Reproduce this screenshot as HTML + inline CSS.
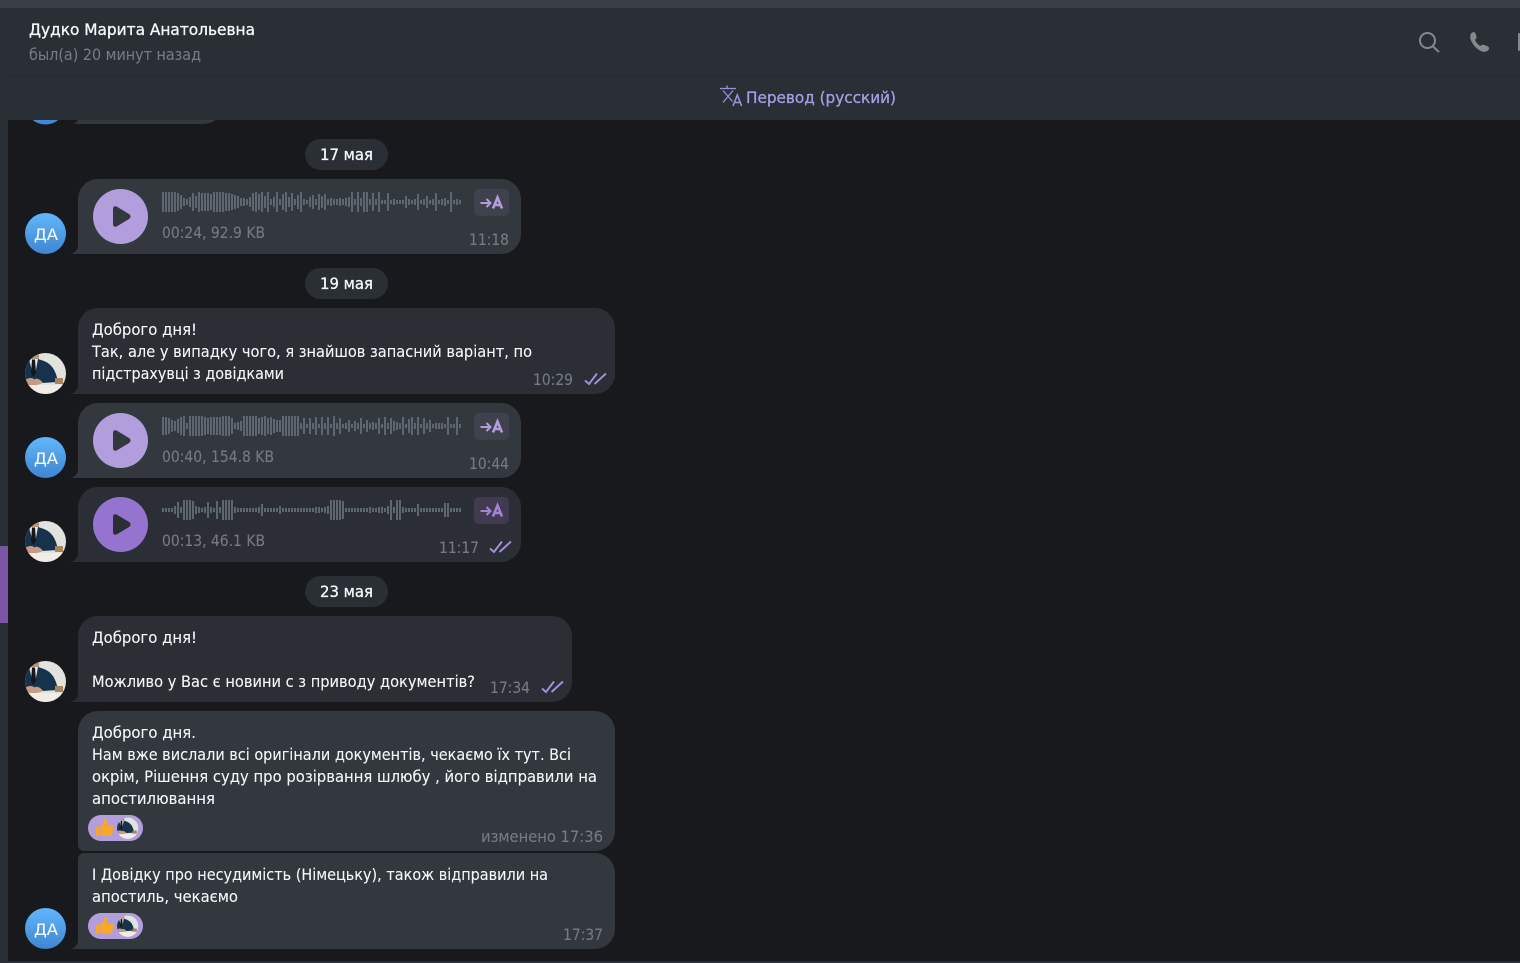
<!DOCTYPE html>
<html><head><meta charset="utf-8"><style>
html,body{margin:0;padding:0;width:1520px;height:963px;overflow:hidden;background:#17191c}
svg{display:block}
text{font-family:"DejaVu Sans","Liberation Sans",sans-serif;font-size:16px;fill:#f5f6f7;stroke:#f5f6f7;stroke-width:.12}
text.t{fill:#757b81;stroke:#757b81;stroke-width:.1}
text.m{stroke:#f5f6f7;stroke-width:.35}
.w{fill:none;stroke:#5c6772;stroke-width:2}
.c{fill:none;stroke:#a590e0;stroke-width:1.9}
.b{fill:#33383f}.o{fill:#2b2f35}
</style></head><body>
<svg width="1520" height="963" viewBox="0 0 1520 963" xmlns="http://www.w3.org/2000/svg">
<defs>
<linearGradient id="g" x1="0" y1="0" x2="0" y2="1"><stop offset="0" stop-color="#62b6fd"/><stop offset="1" stop-color="#3f86cf"/></linearGradient>
<clipPath id="cp"><circle cx="20.5" cy="20.5" r="20.5"/></clipPath>
<g id="ph"><g clip-path="url(#cp)">
<rect width="41" height="41" fill="#e2e2de"/>
<rect x="4" y="-2" width="10" height="9" fill="#b8937f"/>
<path d="M0 9L4 6 13 6 19 8C27 11 31 18 33 29L0 31Z" fill="#16324c"/>
<path d="M4 6H13L10 22H8Z" fill="#e9e9e9"/>
<path d="M7 6.500H10L11 20 8.500 24 6 20Z" fill="#14161a"/>
<path d="M0 27C4 24 8 25 9.500 26.500 12 24.500 16 27 18 30 11 33 4 33 0 31Z" fill="#c79a85"/>
<path d="M0 32H41V41H0Z" fill="#f1ece5"/>
<path d="M30 25h8v6h-8z" fill="#a8865c"/>
<path d="M2 29H0V35H4Z" fill="#3a3f48"/>
</g></g>
<g id="th"><path d="M1 8.500h3.500v9H1zM5.500 8.500L9 4.500 9.500 0.500C12 0 12.500 3 11.500 7.500H17C18.800 7.500 18.800 10 17.500 10.300 18.700 11 18.500 13 17.200 13.200 18 14.200 17.500 15.500 16.300 15.700 16.800 17 16 18 15 18H8C6.500 18 5.500 17.300 5.500 16.500Z" fill="#f8a824"/></g>
<g id="tr"><path d="M4.500 6H14" fill="none" stroke="currentColor" stroke-width="2"/><path d="M10.500 2L14.500 6 10.500 10" fill="none" stroke="currentColor" stroke-width="2"/><path d="M17 11.500L21.500 .5 26 11.500M18.500 8H24.500" fill="none" stroke="currentColor" stroke-width="2.600"/></g>
<path id="ck" d="M0 8.500L4 12 12 1.500M9.500 12L21 1.500" class="c"/>
</defs>

<rect width="1520" height="963" fill="#17191c"/>
<rect x="0" y="0" width="8" height="963" fill="#2a2e35"/>
<rect x="0" y="546" width="8" height="77" fill="#7b56a5"/>
<rect x="0" y="961" width="1520" height="2" fill="#2a2e35"/>

<!-- partial top -->
<circle cx="45.500" cy="104" r="20.500" fill="url(#g)"/>
<path d="M72 124c4-1 6-2 6-6v-10H220v0q0 16-18 16z" class="b"/>

<!-- header -->
<rect x="8" y="8" width="1512" height="112" fill="#2a2e35"/>
<rect x="0" y="0" width="1520" height="8" fill="#393f47"/>
<rect x="8" y="75" width="1512" height="1" fill="#272b30"/>
<text x="29" y="35" textLength="226" lengthAdjust="spacingAndGlyphs" class="m">Дудко Марита Анатольевна</text>
<text x="29" y="60" textLength="172" lengthAdjust="spacingAndGlyphs" class="t">был(а) 20 минут назад</text>
<g fill="none" stroke="#85898d" stroke-width="2"><circle cx="1427.500" cy="40.500" r="7.500"/><path d="M1433 46.500L1439 52"/></g>
<path d="M1471.500 33c2-1.500 3.500-1 4.300 1l.7 2.500c.3 1.500-.5 2.400-1.500 3.200.8 2.500 3 5 5.500 6.200 1-.9 2-1.300 3.300-1l3 1c2 .7 3 2.500 1.800 4-1.500 1.600-4 2.500-6.500 1.600-5-1.700-10-7-11.600-12.500-.6-2.400-.1-4.700.9-6z" fill="#85898d"/>
<rect x="1518" y="33" width="2" height="18" rx="1" fill="#85898d"/>
<g fill="none" stroke="#9793d8" stroke-width="1.500"><path d="M720 88.500H736M727 85.500v3M723 90.500l9.500 11M733 90.500l-10 12" stroke-width="1.300"/><path d="M733 106l4.300-11 4.300 11M734.500 102.500h5.500" stroke-width="1.600"/></g>
<text x="746" y="103" textLength="150" lengthAdjust="spacingAndGlyphs" style="fill:#a29fe6;stroke:#a29fe6;stroke-width:.3">Перевод (русский)</text>

<!-- dates -->
<rect x="305" y="139" width="83" height="31" rx="15.500" fill="#2a2e35"/>
<text x="320" y="160" textLength="53" lengthAdjust="spacingAndGlyphs" class="m">17 мая</text>
<rect x="305" y="268" width="83" height="31" rx="15.500" fill="#2a2e35"/>
<text x="320" y="289" textLength="53" lengthAdjust="spacingAndGlyphs" class="m">19 мая</text>
<rect x="305" y="576" width="83" height="31" rx="15.500" fill="#2a2e35"/>
<text x="320" y="597" textLength="53" lengthAdjust="spacingAndGlyphs" class="m">23 мая</text>

<!-- bubble 1 -->
<path class="b" d="M98 179H501a20 20 0 0 1 20 20V234a20 20 0 0 1-20 20H70c5-1 8-4 8-9V199a20 20 0 0 1 20-20z"/>
<circle cx="45.500" cy="233.500" r="20.500" fill="url(#g)"/>
<text x="34" y="240" textLength="24" lengthAdjust="spacingAndGlyphs">ДА</text>
<circle cx="120.500" cy="216.500" r="27.500" fill="#b39edd"/>
<path d="M113 209c0-2.500 2-3.500 4-2.300l12 7.300c2 1.200 2 3.800 0 5l-12 7.300c-2 1.200-4 .2-4-2.300z" fill="#33383f"/>
<g transform="translate(0 202)"><path class="w" d="M163-10v20M166-10v20M169-10v20M172-10v20M175-10v20M178-9v18M181-7v14M184-4v8M187-3v6M190-5v10M193-9v18M196-6v12M199-10v20M202-9v18M205-9v18M208-9v18M211-8v16M214-10v20M217-10v20M220-10v20M223-10v20M226-9v18M229-9v18M232-8v16M235-7v14M238-6v12M241-4v8M244-4v8M247-3v6M250-5v10M253-9v18M256-10v20M259-8v16M262-10v20M265-6v12M268-10v20M271-3v6M274-5v10M277-10v20M280-3v6M283-8v16M286-10v20M289-5v10M292-9v18M295-3v6M298-7v14M301-10v20M304-3v6M307-2v4M310-5v10M313-7v14M316-3v6M319-8v16M322-6v12M325-8v16M328-3v6M331-4v8M334-3v6M337-3v6M340-4v8M343-3v6M346-4v8M349-5v10M352-10v20M355-3v6M358-10v20M361-4v8M364-10v20M367-10v20M370-3v6M373-9v18M376-3v6M379-10v20M382-2v4M385-2v4M388-9v18M391-2v4M394-3v6M397-2v4M400-2v4M403-2v4M406-6v12M409-3v6M412-2v4M415-3v6M418-8v16M421-2v4M424-3v6M427-6v12M430-2v4M433-3v6M436-9v18M439-2v4M442-3v6M445-4v8M448-2v4M451-10v20M454-2v4M457-3v6M460-2v4"/></g>
<text x="162" y="238" textLength="103" lengthAdjust="spacingAndGlyphs" class="t">00:24, 92.9 KB</text>
<text x="469" y="245" textLength="40" lengthAdjust="spacingAndGlyphs" class="t">11:18</text>
<rect x="474" y="189" width="35" height="27" rx="5" fill="#3f424d"/>
<use href="#tr" x="476" y="197" style="color:#b39ddb"/>

<!-- bubble 2 -->
<path class="o" d="M98 308H595a20 20 0 0 1 20 20V374a20 20 0 0 1-20 20H70c5-1 8-4 8-9V328a20 20 0 0 1 20-20z"/>
<use href="#ph" x="25" y="353"/>
<text x="92" y="335" textLength="105" lengthAdjust="spacingAndGlyphs">Доброго дня!</text>
<text x="92" y="357" textLength="440" lengthAdjust="spacingAndGlyphs">Так, але у випадку чого, я знайшов запасний варіант, по</text>
<text x="92" y="379" textLength="192" lengthAdjust="spacingAndGlyphs">підстрахувці з довідками</text>
<text x="533" y="385" textLength="40" lengthAdjust="spacingAndGlyphs" class="t">10:29</text>
<use href="#ck" x="585" y="372"/>

<!-- bubble 3 -->
<path class="b" d="M98 403H501a20 20 0 0 1 20 20V458a20 20 0 0 1-20 20H70c5-1 8-4 8-9V423a20 20 0 0 1 20-20z"/>
<circle cx="45.500" cy="457.500" r="20.500" fill="url(#g)"/>
<text x="34" y="464" textLength="24" lengthAdjust="spacingAndGlyphs">ДА</text>
<circle cx="120.500" cy="440.500" r="27.500" fill="#b39edd"/>
<path d="M113 433c0-2.500 2-3.500 4-2.300l12 7.300c2 1.200 2 3.800 0 5l-12 7.300c-2 1.200-4 .2-4-2.300z" fill="#33383f"/>
<g transform="translate(0 426)"><path class="w" d="M163-9v18M166-9v18M169-8v16M172-6v12M175-5v10M178-7v14M181-9v18M184-10v20M187-3v6M190-10v20M193-10v20M196-10v20M199-10v20M202-10v20M205-9v18M208-8v16M211-9v18M214-9v18M217-9v18M220-9v18M223-10v20M226-10v20M229-10v20M232-8v16M235-3v6M238-4v8M241-5v10M244-10v20M247-10v20M250-10v20M253-10v20M256-10v20M259-8v16M262-9v18M265-10v20M268-8v16M271-9v18M274-7v14M277-6v12M280-6v12M283-10v20M286-10v20M289-10v20M292-10v20M295-10v20M298-10v20M301-3v6M304-8v16M307-2v4M310-8v16M313-3v6M316-9v18M319-2v4M322-9v18M325-3v6M328-9v18M331-2v4M334-10v20M337-3v6M340-8v16M343-2v4M346-3v6M349-6v12M352-2v4M355-5v10M358-3v6M361-8v16M364-2v4M367-6v12M370-3v6M373-4v8M376-3v6M379-8v16M382-2v4M385-9v18M388-3v6M391-8v16M394-5v10M397-4v8M400-3v6M403-9v18M406-2v4M409-7v14M412-9v18M415-3v6M418-9v18M421-2v4M424-8v16M427-3v6M430-6v12M433-2v4M436-3v6M439-3v6M442-3v6M445-2v4M448-9v18M451-2v4M454-2v4M457-9v18M460-2v4"/></g>
<text x="162" y="462" textLength="112" lengthAdjust="spacingAndGlyphs" class="t">00:40, 154.8 KB</text>
<text x="469" y="469" textLength="40" lengthAdjust="spacingAndGlyphs" class="t">10:44</text>
<rect x="474" y="413" width="35" height="27" rx="5" fill="#3f424d"/>
<use href="#tr" x="476" y="421" style="color:#b39ddb"/>

<!-- bubble 4 -->
<path class="o" d="M98 487H501a20 20 0 0 1 20 20V542a20 20 0 0 1-20 20H70c5-1 8-4 8-9V507a20 20 0 0 1 20-20z"/>
<use href="#ph" x="25" y="521"/>
<circle cx="120.500" cy="524.500" r="27.500" fill="#9574cf"/>
<path d="M113 517c0-2.500 2-3.500 4-2.300l12 7.300c2 1.200 2 3.800 0 5l-12 7.300c-2 1.200-4 .2-4-2.300z" fill="#2b2f35"/>
<g transform="translate(0 510)"><path class="w" d="M163-2v4M166-2v4M169-2v4M172-2v4M175-4v8M178-8v16M181-3v6M184-10v20M187-10v20M190-10v20M193-9v18M196-4v8M199-3v6M202-2v4M205-3v6M208-8v16M211-3v6M214-2v4M217-9v18M220-3v6M223-10v20M226-10v20M229-10v20M232-10v20M235-3v6M238-2v4M241-2v4M244-2v4M247-2v4M250-2v4M253-2v4M256-2v4M259-3v6M262-6v12M265-2v4M268-2v4M271-2v4M274-2v4M277-2v4M280-4v8M283-2v4M286-2v4M289-2v4M292-2v4M295-2v4M298-2v4M301-2v4M304-2v4M307-2v4M310-2v4M313-2v4M316-3v6M319-3v6M322-2v4M325-3v6M328-4v8M331-10v20M334-10v20M337-10v20M340-10v20M343-9v18M346-2v4M349-2v4M352-2v4M355-2v4M358-2v4M361-2v4M364-2v4M367-2v4M370-3v6M373-2v4M376-2v4M379-3v6M382-3v6M385-2v4M388-4v8M391-10v20M394-3v6M397-10v20M400-10v20M403-3v6M406-2v4M409-2v4M412-2v4M415-2v4M418-6v12M421-2v4M424-2v4M427-2v4M430-2v4M433-2v4M436-2v4M439-2v4M442-2v4M445-7v14M448-7v14M451-2v4M454-2v4M457-2v4M460-2v4"/></g>
<text x="162" y="546" textLength="103" lengthAdjust="spacingAndGlyphs" class="t">00:13, 46.1 KB</text>
<text x="439" y="553" textLength="40" lengthAdjust="spacingAndGlyphs" class="t">11:17</text>
<use href="#ck" x="490" y="540"/>
<rect x="474" y="497" width="35" height="27" rx="5" fill="#413a50"/>
<use href="#tr" x="476" y="505" style="color:#a283d8"/>

<!-- bubble 5 -->
<path class="o" d="M98 616H552a20 20 0 0 1 20 20V682a20 20 0 0 1-20 20H70c5-1 8-4 8-9V636a20 20 0 0 1 20-20z"/>
<use href="#ph" x="25" y="661"/>
<text x="92" y="643" textLength="105" lengthAdjust="spacingAndGlyphs">Доброго дня!</text>
<text x="92" y="687" textLength="383" lengthAdjust="spacingAndGlyphs">Можливо у Вас є новини с з приводу документів?</text>
<text x="490" y="693" textLength="40" lengthAdjust="spacingAndGlyphs" class="t">17:34</text>
<use href="#ck" x="542" y="680"/>

<!-- bubble 6 -->
<path class="b" d="M98 711H595a20 20 0 0 1 20 20V831a20 20 0 0 1-20 20H84a6 6 0 0 1-6-6V731a20 20 0 0 1 20-20z"/>
<text x="92" y="738" textLength="104" lengthAdjust="spacingAndGlyphs">Доброго дня.</text>
<text x="92" y="760" textLength="479" lengthAdjust="spacingAndGlyphs">Нам вже вислали всі оригінали документів, чекаємо їх тут. Всі</text>
<text x="92" y="782" textLength="505" lengthAdjust="spacingAndGlyphs">окрім, Рішення суду про розірвання шлюбу , його відправили на</text>
<text x="92" y="804" textLength="123" lengthAdjust="spacingAndGlyphs">апостилювання</text>
<rect x="88" y="815" width="55" height="26" rx="13" fill="#b39edd"/>
<use href="#th" x="95" y="818"/>
<g transform="translate(117 817.500) scale(.52)"><use href="#ph"/></g>
<text x="481" y="842" textLength="122" lengthAdjust="spacingAndGlyphs" class="t">изменено 17:36</text>

<!-- bubble 7 -->
<path class="b" d="M84 853H595a20 20 0 0 1 20 20V929a20 20 0 0 1-20 20H70c5-1 8-4 8-9V859a6 6 0 0 1 6-6z"/>
<circle cx="45.500" cy="928.500" r="20.500" fill="url(#g)"/>
<text x="34" y="935" textLength="24" lengthAdjust="spacingAndGlyphs">ДА</text>
<text x="92" y="880" textLength="456" lengthAdjust="spacingAndGlyphs">І Довідку про несудимість (Німецьку), також відправили на</text>
<text x="92" y="902" textLength="146" lengthAdjust="spacingAndGlyphs">апостиль, чекаємо</text>
<rect x="88" y="913" width="55" height="26" rx="13" fill="#b39edd"/>
<use href="#th" x="95" y="916"/>
<g transform="translate(117 915.500) scale(.52)"><use href="#ph"/></g>
<text x="563" y="940" textLength="40" lengthAdjust="spacingAndGlyphs" class="t">17:37</text>
</svg>
</body></html>
